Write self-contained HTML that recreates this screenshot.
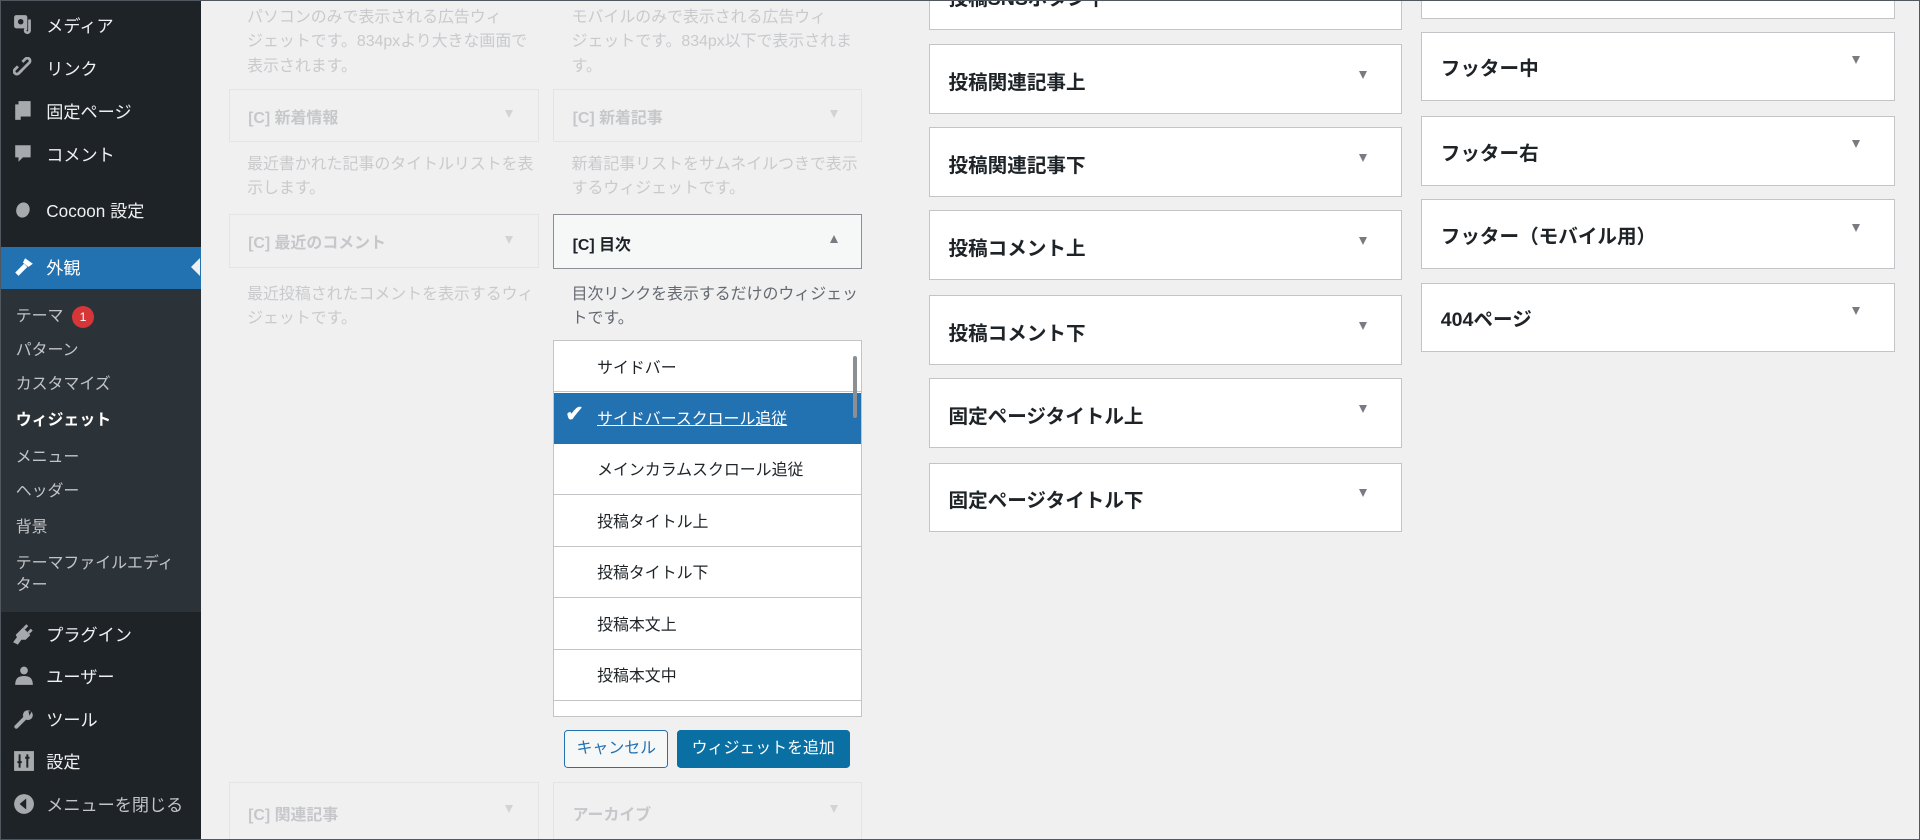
<!DOCTYPE html>
<html><head><meta charset="utf-8"><style>
html,body{margin:0;padding:0;width:1920px;height:840px;overflow:hidden;background:#f0f0f1}
#w{zoom:1.2244898;width:1568px;height:686px;position:relative;overflow:hidden;font-family:"Liberation Sans","Noto Sans CJK JP",sans-serif;background:#f0f0f1;box-sizing:border-box;border:1px solid #50575e}
.a{position:absolute;white-space:nowrap}
#sb{position:absolute;left:0;top:0;width:163px;height:686px;background:#1d2327}
.mi{position:absolute;left:37px;color:#f0f0f1;font-size:14px;line-height:20px}
.ic{position:absolute;left:10px;width:18px;height:18px}
.sub{position:absolute;left:12px;color:#c3c4c7;font-size:13px;line-height:18px}
.fb{position:absolute;border:1px solid #e4e4e6;background:#f0f0f1;height:43px;box-sizing:border-box}
.fb span{position:absolute;left:15px;top:12px;font-weight:bold;font-size:13px;color:#c6c7ca}
.fb i,.bx i{position:absolute;width:0;height:0;border-left:4px solid transparent;border-right:4px solid transparent;border-top:7px solid #d2d3d5}
.fd{position:absolute;color:#c9cacc;font-size:13px;line-height:20px}
.bx{position:absolute;background:#fff;border:1px solid #c3c4c7;height:57px;box-sizing:border-box}
.bx span{position:absolute;left:15px;top:17px;font-weight:bold;font-size:16px;color:#1d2327}
.bx i{border-top-color:#787c82;top:21px}
.li{position:absolute;left:0;width:251px;height:41px;border-bottom:1px solid #c3c4c7;font-size:13px;color:#1d2327;background:#fff}
.li span{position:absolute;left:35px;top:11px}
</style></head><body><div id="w">
<div id="sb">
 <svg class="ic" style="top:11px" viewBox="0 0 20 20"><rect x="1" y="1" width="12" height="12" rx="2" fill="#a7aaad"/><circle cx="7" cy="7" r="2.5" fill="#1d2327"/><path d="M15 5v10a2 2 0 1 1-2-2" stroke="#a7aaad" stroke-width="2.5" fill="none"/></svg>
 <div class="mi" style="top:11px">メディア</div>
 <svg class="ic" style="top:46px" viewBox="0 0 20 20"><g fill="none" stroke="#a7aaad" stroke-width="2.5"><path d="M8 12l-3 3a2.5 2.5 0 0 1-3.5-3.5l3-3"/><path d="M12 8l3-3a2.5 2.5 0 0 0-3.5-3.5l-3 3"/><path d="M7 13l6-6"/></g></svg>
 <div class="mi" style="top:46px">リンク</div>
 <svg class="ic" style="top:81px" viewBox="0 0 20 20"><rect x="2" y="4" width="5" height="14" fill="#a7aaad"/><rect x="5" y="1" width="11" height="14" fill="#a7aaad"/></svg>
 <div class="mi" style="top:81px">固定ページ</div>
 <svg class="ic" style="top:116px" viewBox="0 0 20 20"><path d="M2 2h14v11h-7l-4 4v-4H2z" fill="#a7aaad"/></svg>
 <div class="mi" style="top:116px">コメント</div>
 <svg class="ic" style="top:162px" viewBox="0 0 20 20"><ellipse cx="9" cy="10" rx="6" ry="7" fill="#a7aaad" transform="rotate(20 9 10)"/></svg>
 <div class="mi" style="top:162px">Cocoon 設定</div>
 <div style="position:absolute;left:0;top:201px;width:163px;height:34px;background:#2271b1"></div>
 <div style="position:absolute;left:155px;top:210px;border-right:8px solid #f0f0f1;border-top:8px solid transparent;border-bottom:8px solid transparent"></div>
 <svg class="ic" style="top:208px" viewBox="0 0 20 20"><path d="M11 2l7 5-4 3-5-4z M10 7l3 3-8 8-3-3z" fill="#fff"/></svg>
 <div class="mi" style="top:208px;color:#fff">外観</div>
 <div style="position:absolute;left:0;top:235px;width:163px;height:264px;background:#2c3338"></div>
 <div class="sub" style="top:249px">テーマ</div>
 <div class="a" style="left:58px;top:249px;width:18px;height:18px;border-radius:9px;background:#d63638;color:#fff;font-size:10px;line-height:18px;text-align:center">1</div>
 <div class="sub" style="top:277px">パターン</div>
 <div class="sub" style="top:305px">カスタマイズ</div>
 <div class="sub" style="top:334px;color:#fff;font-weight:bold">ウィジェット</div>
 <div class="sub" style="top:364px">メニュー</div>
 <div class="sub" style="top:392px">ヘッダー</div>
 <div class="sub" style="top:421px">背景</div>
 <div class="sub" style="top:451px">テーマファイルエディ<br>ター</div>
 <svg class="ic" style="top:508px" viewBox="0 0 20 20"><path d="M4 11l5-5 5 5-3 3H7l-3 4-2-1 3-4z M10 5l3-3 M14 9l3-3" stroke="#a7aaad" stroke-width="2.5" fill="#a7aaad"/></svg>
 <div class="mi" style="top:508px">プラグイン</div>
 <svg class="ic" style="top:542px" viewBox="0 0 20 20"><circle cx="10" cy="5" r="3.5" fill="#a7aaad"/><path d="M2 18c0-6 3-8 8-8s8 2 8 8z" fill="#a7aaad"/></svg>
 <div class="mi" style="top:542px">ユーザー</div>
 <svg class="ic" style="top:577px" viewBox="0 0 20 20"><path d="M3 17l8-8" stroke="#a7aaad" stroke-width="3.5" stroke-linecap="round"/><circle cx="13.5" cy="6.5" r="4.5" fill="#a7aaad"/><path d="M14 3l3 0-2 4z" fill="#1d2327"/></svg>
 <div class="mi" style="top:577px">ツール</div>
 <svg class="ic" style="top:612px" viewBox="0 0 20 20"><rect x="1" y="1" width="18" height="18" fill="#a7aaad"/><path d="M6 4v12M13 4v12M4 11h4M11 7h4" stroke="#1d2327" stroke-width="1.8"/></svg>
 <div class="mi" style="top:612px">設定</div>
 <svg class="ic" style="top:647px" viewBox="0 0 20 20"><circle cx="10" cy="10" r="9" fill="#a7aaad"/><path d="M12 5v10l-6-5z" fill="#1d2327"/></svg>
 <div class="mi" style="top:647px;color:#c3c4c7">メニューを閉じる</div>
</div>

<div class="fd" style="left:201px;top:4px">パソコンのみで表示される広告ウィ<br>ジェットです。834pxより大きな画面で<br>表示されます。</div>
<div class="fd" style="left:466px;top:4px">モバイルのみで表示される広告ウィ<br>ジェットです。834px以下で表示されま<br>す。</div>
<div class="fb" style="left:186px;top:72px;width:253px"><span>[C] 新着情報</span><i style="left:225px;top:16px"></i></div>
<div class="fb" style="left:451px;top:72px;width:252px"><span>[C] 新着記事</span><i style="left:225px;top:16px"></i></div>
<div class="fd" style="left:201px;top:124px">最近書かれた記事のタイトルリストを表<br>示します。</div>
<div class="fd" style="left:466px;top:124px">新着記事リストをサムネイルつきで表示<br>するウィジェットです。</div>
<div class="fb" style="left:186px;top:174px;width:253px;height:44px"><span>[C] 最近のコメント</span><i style="left:225px;top:17px"></i></div>
<div class="a" style="left:451px;top:174px;width:252px;height:45px;box-sizing:border-box;border:1px solid #8c8f94;background:#f6f7f7">
 <span class="a" style="left:15px;top:14px;font-weight:bold;font-size:13px;color:#1d2327">[C] 目次</span>
 <i class="a" style="left:225px;top:16px;border-left:4px solid transparent;border-right:4px solid transparent;border-bottom:7px solid #787c82"></i>
</div>
<div class="fd" style="left:201px;top:230px">最近投稿されたコメントを表示するウィ<br>ジェットです。</div>
<div class="fd" style="left:466px;top:230px;color:#646970">目次リンクを表示するだけのウィジェッ<br>トです。</div>

<div class="a" style="left:451px;top:277px;width:252px;height:308px;box-sizing:border-box;border:1px solid #c3c4c7;background:#fff;overflow:hidden">
 <div class="li" style="top:0"><span>サイドバー</span></div>
 <div class="li" style="top:42px;background:#2271b1;color:#fff;border-bottom-color:#2271b1"><span style="text-decoration:underline">サイドバースクロール追従</span><span style="left:9px;top:7px;font-size:18px;font-weight:bold">✔</span></div>
 <div class="li" style="top:84px"><span>メインカラムスクロール追従</span></div>
 <div class="li" style="top:126px"><span>投稿タイトル上</span></div>
 <div class="li" style="top:168px"><span>投稿タイトル下</span></div>
 <div class="li" style="top:210px"><span>投稿本文上</span></div>
 <div class="li" style="top:252px"><span>投稿本文中</span></div>
 <div class="li" style="top:294px"><span>投稿本文下</span></div>
 <div class="a" style="left:244px;top:12px;width:3px;height:51px;background:#8c8f94;border-radius:2px"></div>
</div>
<div class="a" style="left:460px;top:595px;width:85px;height:31px;box-sizing:border-box;border:1px solid #2271b1;border-radius:3px;background:#f6f7f7;color:#2271b1;font-size:13px;line-height:29px;text-align:center">キャンセル</div>
<div class="a" style="left:552px;top:595px;width:141px;height:31px;border-radius:3px;background:#0a6fa3;color:#fff;font-size:13px;line-height:31px;text-align:center">ウィジェットを追加</div>
<div class="fb" style="left:186px;top:638px;width:253px;height:55px"><span style="top:15px">[C] 関連記事</span><i style="left:225px;top:18px"></i></div>
<div class="fb" style="left:451px;top:638px;width:252px;height:55px"><span style="top:15px">アーカイブ</span><i style="left:225px;top:18px"></i></div>

<div class="bx" style="left:758px;top:-33px;width:386px"><span>投稿SNSボタン下</span></div>
<div class="bx" style="left:758px;top:35px;width:386px"><span>投稿関連記事上</span><i style="left:350px"></i></div>
<div class="bx" style="left:758px;top:103px;width:386px"><span>投稿関連記事下</span><i style="left:350px"></i></div>
<div class="bx" style="left:758px;top:171px;width:386px"><span>投稿コメント上</span><i style="left:350px"></i></div>
<div class="bx" style="left:758px;top:240px;width:386px"><span>投稿コメント下</span><i style="left:350px"></i></div>
<div class="bx" style="left:758px;top:308px;width:386px"><span>固定ページタイトル上</span><i style="left:350px"></i></div>
<div class="bx" style="left:758px;top:377px;width:386px"><span>固定ページタイトル下</span><i style="left:350px"></i></div>

<div class="bx" style="left:1160px;top:-42px;width:387px"></div>
<div class="bx" style="left:1160px;top:25px;width:387px"><span style="top:16px">フッター中</span><i style="left:351px;top:19px"></i></div>
<div class="bx" style="left:1160px;top:94px;width:387px"><span style="top:16px">フッター右</span><i style="left:351px;top:19px"></i></div>
<div class="bx" style="left:1160px;top:162px;width:387px"><span style="top:16px">フッター（モバイル用）</span><i style="left:351px;top:19px"></i></div>
<div class="bx" style="left:1160px;top:230px;width:387px"><span style="top:16px">404ページ</span><i style="left:351px;top:19px"></i></div>
</div></body></html>
